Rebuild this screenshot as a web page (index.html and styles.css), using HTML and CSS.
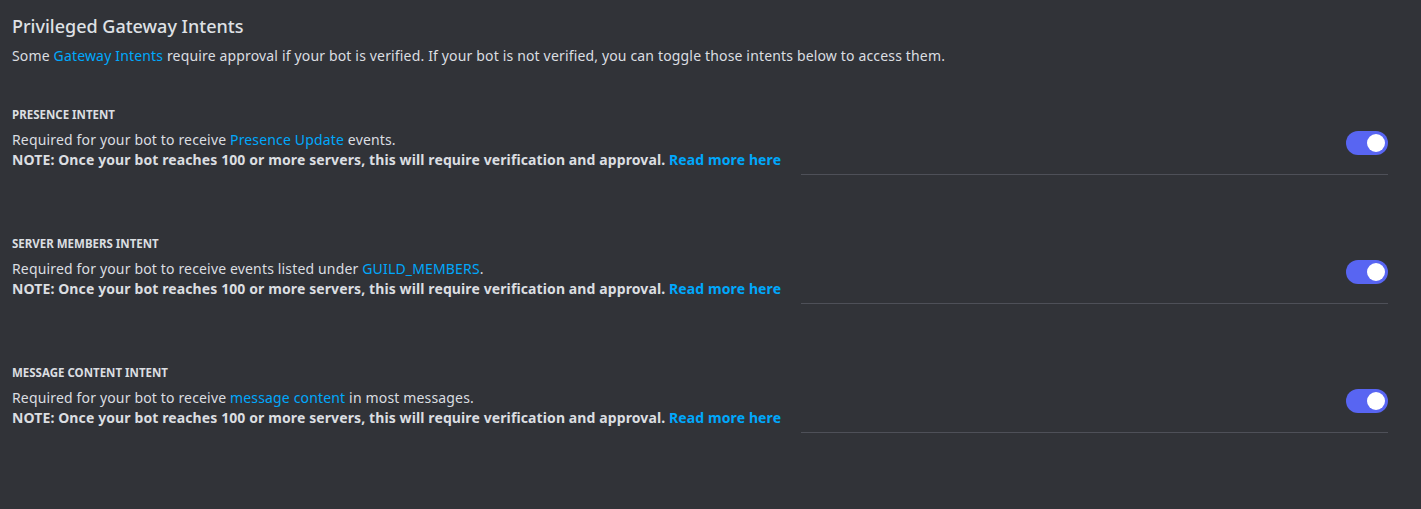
FILE: index.html
```html
<!DOCTYPE html>
<html lang="en">
<head>
<meta charset="utf-8">
<link rel="stylesheet" href="styles.css">
</head>
<body>
<main class="page">
  <h2 class="title">Privileged Gateway Intents</h2>
  <p class="desc">Some <a class="link">Gateway Intents</a> require approval if your bot is verified. If your bot is not verified, you can toggle those intents below to access them.</p>

  <section class="intent">
    <h3 class="label">PRESENCE INTENT</h3>
    <div class="row">
      <div class="text">
        <div class="line">Required for your bot to receive <a class="link">Presence Update</a> events.</div>
        <div class="line note">NOTE: Once your bot reaches 100 or more servers, this will require verification and approval. <a class="link">Read more here</a></div>
      </div>
      <div class="toggle"><span class="knob"></span></div>
    </div>
    <div class="divider"></div>
  </section>

  <section class="intent">
    <h3 class="label">SERVER MEMBERS INTENT</h3>
    <div class="row">
      <div class="text">
        <div class="line">Required for your bot to receive events listed under <a class="link">GUILD_MEMBERS</a>.</div>
        <div class="line note">NOTE: Once your bot reaches 100 or more servers, this will require verification and approval. <a class="link">Read more here</a></div>
      </div>
      <div class="toggle"><span class="knob"></span></div>
    </div>
    <div class="divider"></div>
  </section>

  <section class="intent">
    <h3 class="label">MESSAGE CONTENT INTENT</h3>
    <div class="row">
      <div class="text">
        <div class="line">Required for your bot to receive <a class="link">message content</a> in most messages.</div>
        <div class="line note">NOTE: Once your bot reaches 100 or more servers, this will require verification and approval. <a class="link">Read more here</a></div>
      </div>
      <div class="toggle"><span class="knob"></span></div>
    </div>
    <div class="divider"></div>
  </section>
</main>
</body>
</html>
```

FILE: styles.css
```css
html, body {
  margin: 0;
  padding: 0;
  background: #313338;
  height: 100%;
}
body {
  font-family: "Noto Sans", "Open Sans", sans-serif;
  color: #dbdee1;
}
.page {
  padding: 14px 33px 0 12px;
}
.title {
  margin: 0;
  font-size: 18px;
  line-height: 24px;
  font-weight: 500;
  color: #dfe1e5;
}
.desc {
  margin: 8px 0 0;
  font-size: 14px;
  line-height: 20px;
  letter-spacing: 0.16px;
}
.link {
  color: #00a8fc;
  text-decoration: none;
}
.intent {
  margin-top: 40px;
}
.intent + .intent {
  margin-top: 60px;
}
.label {
  margin: 0;
  padding-top: 1px;
  font-size: 11.5px;
  line-height: 16px;
  font-weight: 700;
  color: #dbdee1;
}
.row {
  display: flex;
  justify-content: space-between;
  align-items: flex-start;
  margin-top: 7px;
}
.line {
  font-size: 14px;
  line-height: 20px;
  letter-spacing: 0.16px;
}
.note {
  font-weight: 700;
  letter-spacing: 0.11px;
}
.toggle {
  width: 42px;
  height: 24px;
  margin-top: 1px;
  border-radius: 12px;
  background: #5865f2;
  display: flex;
  align-items: center;
  justify-content: flex-end;
  padding: 0 3px;
  box-sizing: border-box;
}
.knob {
  width: 18px;
  height: 18px;
  border-radius: 50%;
  background: #ffffff;
}
.divider {
  margin: 4px 0 0 789px;
  height: 1px;
  background: #4e5058;
}
```
